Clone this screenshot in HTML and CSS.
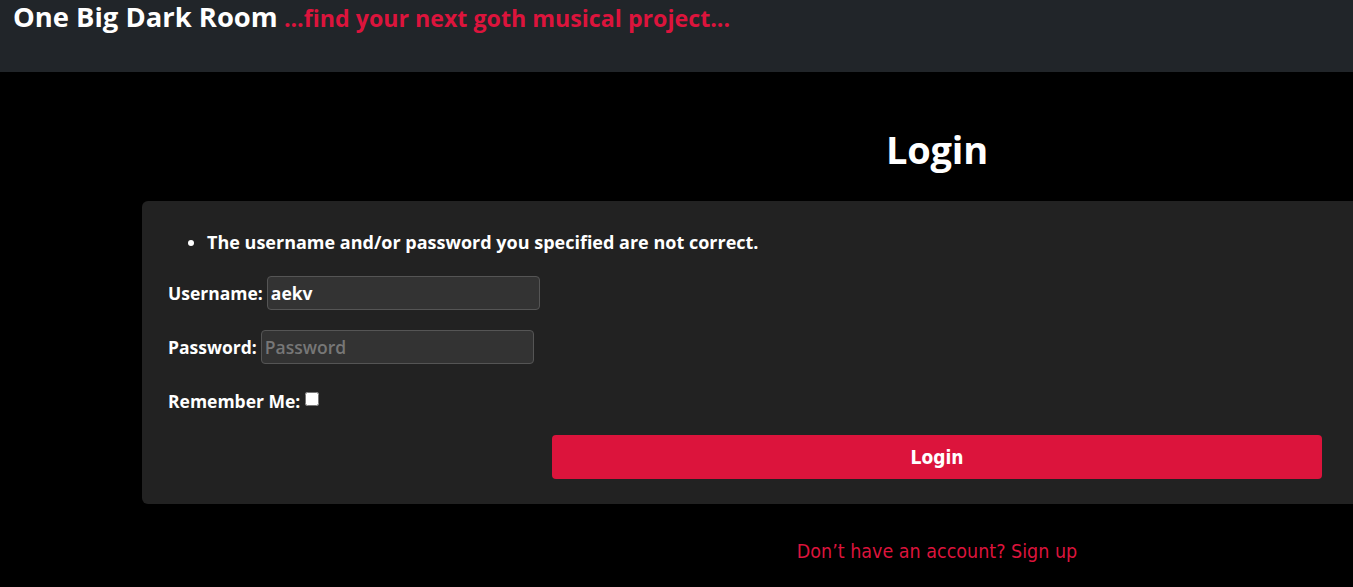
FILE: index.html
```html
<!DOCTYPE html>
<html lang="en">
<head>
<meta charset="utf-8">
<title>One Big Dark Room - Login</title>
<link rel="stylesheet" href="styles.css">
</head>
<body>
<header class="site-header">
  <span class="brand">One Big Dark Room</span>
  <span class="tagline">...find your next goth musical project...</span>
</header>
<main class="container">
  <h1 class="page-title">Login</h1>
  <form class="card">
    <ul class="errors">
      <li>The username and/or password you specified are not correct.</li>
    </ul>
    <div class="row">
      <label class="lbl" for="u">Username:</label>
      <input class="field" id="u" type="text" value="aekv">
    </div>
    <div class="row">
      <label class="lbl" for="p">Password:</label>
      <input class="field" id="p" type="password" placeholder="Password">
    </div>
    <div class="row row-check">
      <label class="lbl" for="r">Remember Me:</label>
      <input class="check" id="r" type="checkbox">
    </div>
    <div class="actions">
      <button class="btn" type="button">Login</button>
    </div>
  </form>
  <p class="signup"><a href="#">Don’t have an account? Sign up</a></p>
</main>
</body>
</html>
```
FILE: styles.css
```css
html, body {
  margin: 0;
  padding: 0;
  overflow: hidden;
  background: #000;
  color: #fff;
  font-family: "Open Sans", "Noto Sans", sans-serif;
  font-weight: 700;
}
.site-header {
  background: #212529;
  height: 72px;
  padding: 0 13px;
  box-sizing: border-box;
  white-space: nowrap;
}
.brand {
  font-size: 27.4px;
  line-height: 33px;
  margin-right: 2px;
}
.tagline {
  color: #dc143c;
  font-size: 23.2px;
}
.container {
  margin-left: 142px;
  width: 1590px;
}
.page-title {
  margin: 0;
  padding-top: 52px;
  height: 129px;
  box-sizing: border-box;
  text-align: center;
  font-size: 38px;
  line-height: 50px;
  letter-spacing: -0.2px;
}
.card {
  background: #222;
  border-radius: 6px;
  padding: 26px 26px 25px;
  display: flex;
  flex-direction: column;
}
.errors {
  margin: 0 0 19px;
  padding-left: 39px;
  font-size: 18px;
  line-height: 30px;
}
.row {
  display: flex;
  align-items: center;
  gap: 4px;
  height: 34px;
  margin-bottom: 20px;
}
.lbl {
  font-size: 17.5px;
}
.field {
  width: 273px;
  height: 34px;
  box-sizing: border-box;
  background: #333;
  border: 1px solid #555;
  border-radius: 4px;
  color: #fff;
  font-family: inherit;
  font-weight: 700;
  font-size: 17.5px;
  padding: 0 3px;
  outline: none;
}
.field::placeholder {
  color: #777;
  font-weight: 600;
}
.row-check {
  height: 14px;
  align-items: flex-start;
  margin-top: 8px;
  margin-bottom: 29px;
  gap: 5px;
}
.row-check .lbl {
  line-height: 20px;
  margin-top: -1px;
}
.check {
  width: 14px;
  height: 14px;
  margin: 0;
}
.actions {
  display: flex;
  justify-content: center;
}
.btn {
  width: 770px;
  height: 44px;
  background: #dc143c;
  border: none;
  border-radius: 4px;
  color: #fff;
  font-family: "DejaVu Sans Condensed", "DejaVu Sans", sans-serif;
  font-stretch: condensed;
  font-weight: 700;
  font-size: 19px;
}
.signup {
  text-align: center;
  margin: 36px 0 0;
  font-family: "DejaVu Sans Condensed", "DejaVu Sans", sans-serif;
  font-stretch: condensed;
  font-weight: 400;
  font-size: 19.5px;
}
.signup a {
  color: #dc143c;
  text-decoration: none;
}
```
